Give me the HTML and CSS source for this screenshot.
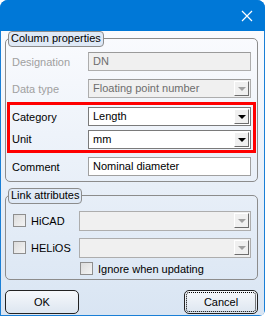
FILE: index.html
```html
<!DOCTYPE html>
<html lang="en">
<head>
    <meta charset="UTF-8">
    <title>Column properties</title>
    <link rel="stylesheet" href="styles.css">
</head>
<body>
    <div class="window">
        <div class="titlebar">
            <svg class="close" width="12" height="12" viewBox="0 0 12 12">
                <path d="M1 1 L11 11 M11 1 L1 11" stroke="#fff" stroke-width="1.2" fill="none"/>
            </svg>
        </div>
        <div class="body">
            <!-- Column properties -->
            <div class="group group-column">
                <span class="legend">Column properties</span>
                <div class="row disabled">
                    <span class="label">Designation</span>
                    <div class="field">DN</div>
                </div>
                <div class="row disabled">
                    <span class="label">Data type</span>
                    <div class="field combo">Floating point number<span class="drop"></span></div>
                </div>
                <div class="highlight">
                    <div class="row">
                        <span class="label">Category</span>
                        <div class="field combo">Length<span class="drop"></span></div>
                    </div>
                    <div class="row">
                        <span class="label">Unit</span>
                        <div class="field combo">mm<span class="drop"></span></div>
                    </div>
                </div>
                <div class="row">
                    <span class="label">Comment</span>
                    <div class="field edit">Nominal diameter</div>
                </div>
            </div>

            <!-- Link attributes -->
            <div class="group group-link">
                <span class="legend">Link attributes</span>
                <div class="link-row">
                    <label class="check"><span class="box"></span>HiCAD</label>
                    <div class="field combo empty"><span class="drop"></span></div>
                </div>
                <div class="link-row">
                    <label class="check"><span class="box"></span>HELiOS</label>
                    <div class="field combo empty"><span class="drop"></span></div>
                </div>
                <label class="check ignore"><span class="box"></span>Ignore when updating</label>
            </div>

            <div class="buttons">
                <button class="btn">OK</button>
                <button class="btn focused">Cancel</button>
            </div>
        </div>
    </div>
</body>
</html>
```

FILE: styles.css
```css
/* Page */
body {
    margin: 0;
    background: #fff;
    font-family: "Liberation Sans", Arial, sans-serif;
    font-size: 11px;
    color: #000;
}

/* Window frame */
.window {
    width: 265px;
    height: 316px;
    box-sizing: border-box;
    display: flex;
    flex-direction: column;
    border-radius: 8px 8px 6px 0;
    overflow: hidden;
    background: #1a7fd6;
}

.titlebar {
    height: 31px;
    flex-shrink: 0;
    background: #0078d7;
    display: flex;
    align-items: center;
    justify-content: flex-end;
    padding-right: 12px;
}

.body {
    flex: 1;
    margin: 0 1px 1px 1px;
    background: linear-gradient(#fafbfe, #d9e5f3);
    padding: 7px 6px 0 4px;
    display: flex;
    flex-direction: column;
}

/* Group boxes */
.group {
    position: relative;
    border: 1px solid #8c8c8c;
    border-radius: 5px;
    padding: 9px 6px 0 6px;
}

.group-column {
    height: 144px;
    box-sizing: border-box;
}

.group-link {
    margin-top: 13px;
    height: 85px;
    box-sizing: border-box;
    padding-top: 11px;
}

.legend {
    position: absolute;
    top: -8px;
    left: 2px;
    padding: 0 2px 1px 2px;
    background: #dfe9f6;
    border: 1px solid #8c8c8c;
    border-radius: 4px;
    line-height: 13px;
}

/* Form rows */
.row {
    display: flex;
    align-items: center;
    height: 27px;
}

.label {
    width: 76px;
    flex-shrink: 0;
}

.disabled .label {
    color: #a0a0a0;
}

.field {
    position: relative;
    width: 163px;
    height: 19px;
    box-sizing: border-box;
    border: 1px solid #7a7a7a;
    background: #fff;
    padding: 0 4px;
    line-height: 17px;
    white-space: nowrap;
}

.disabled .field {
    background: #f0f0f0;
    border-color: #adadad;
    color: #6d6d6d;
    border-top-color: #9a9a9a;
}

.field.edit {
    border-color: #a0a0a0;
}

.combo .drop {
    position: absolute;
    top: 1px;
    right: 1px;
    width: 15px;
    height: 15px;
    box-sizing: border-box;
    background: #f0f0f0;
    border: 1px solid;
    border-color: #fff #6d6d6d #6d6d6d #fff;
}

.combo .drop::after {
    content: "";
    position: absolute;
    left: 3px;
    top: 5px;
    border-left: 4px solid transparent;
    border-right: 4px solid transparent;
    border-top: 4px solid #000;
}

.disabled .combo .drop::after,
.combo.empty .drop::after {
    border-top-color: #a0a0a0;
}

/* Red highlight round category/unit */
.highlight {
    margin: 0 -5px 0 -5px;
    border: 3px solid #f00;
    padding: 0 2px;
}

.highlight .row {
    height: 23px;
}

.highlight .row + .row {
    height: 22px;
}

/* Link attribute rows */
.link-row {
    display: flex;
    align-items: center;
    height: 27px;
}

.link-row .field {
    width: 173px;
    height: 20px;
    background: #f0f0f0;
    border-color: #adadad;
}

.check {
    display: flex;
    align-items: center;
    gap: 5px;
    width: 67px;
    flex-shrink: 0;
    padding-left: 1px;
    box-sizing: border-box;
}

.box {
    width: 11px;
    height: 11px;
    border: 1px solid #8e8e8e;
    background: linear-gradient(135deg, #dcdcdc, #f4f4f4);
}

.check.ignore {
    width: auto;
    margin-left: 67px;
    margin-top: 1px;
}

/* Buttons */
.buttons {
    display: flex;
    justify-content: space-between;
    margin-top: 10px;
}

.btn {
    width: 74px;
    height: 24px;
    font: inherit;
    background: linear-gradient(#f6f8fb, #dde6f0);
    border: 1px solid #222;
    border-radius: 5px;
    color: #000;
}

.btn.focused {
    outline: 1px dotted #000;
    outline-offset: -3px;
}
```
